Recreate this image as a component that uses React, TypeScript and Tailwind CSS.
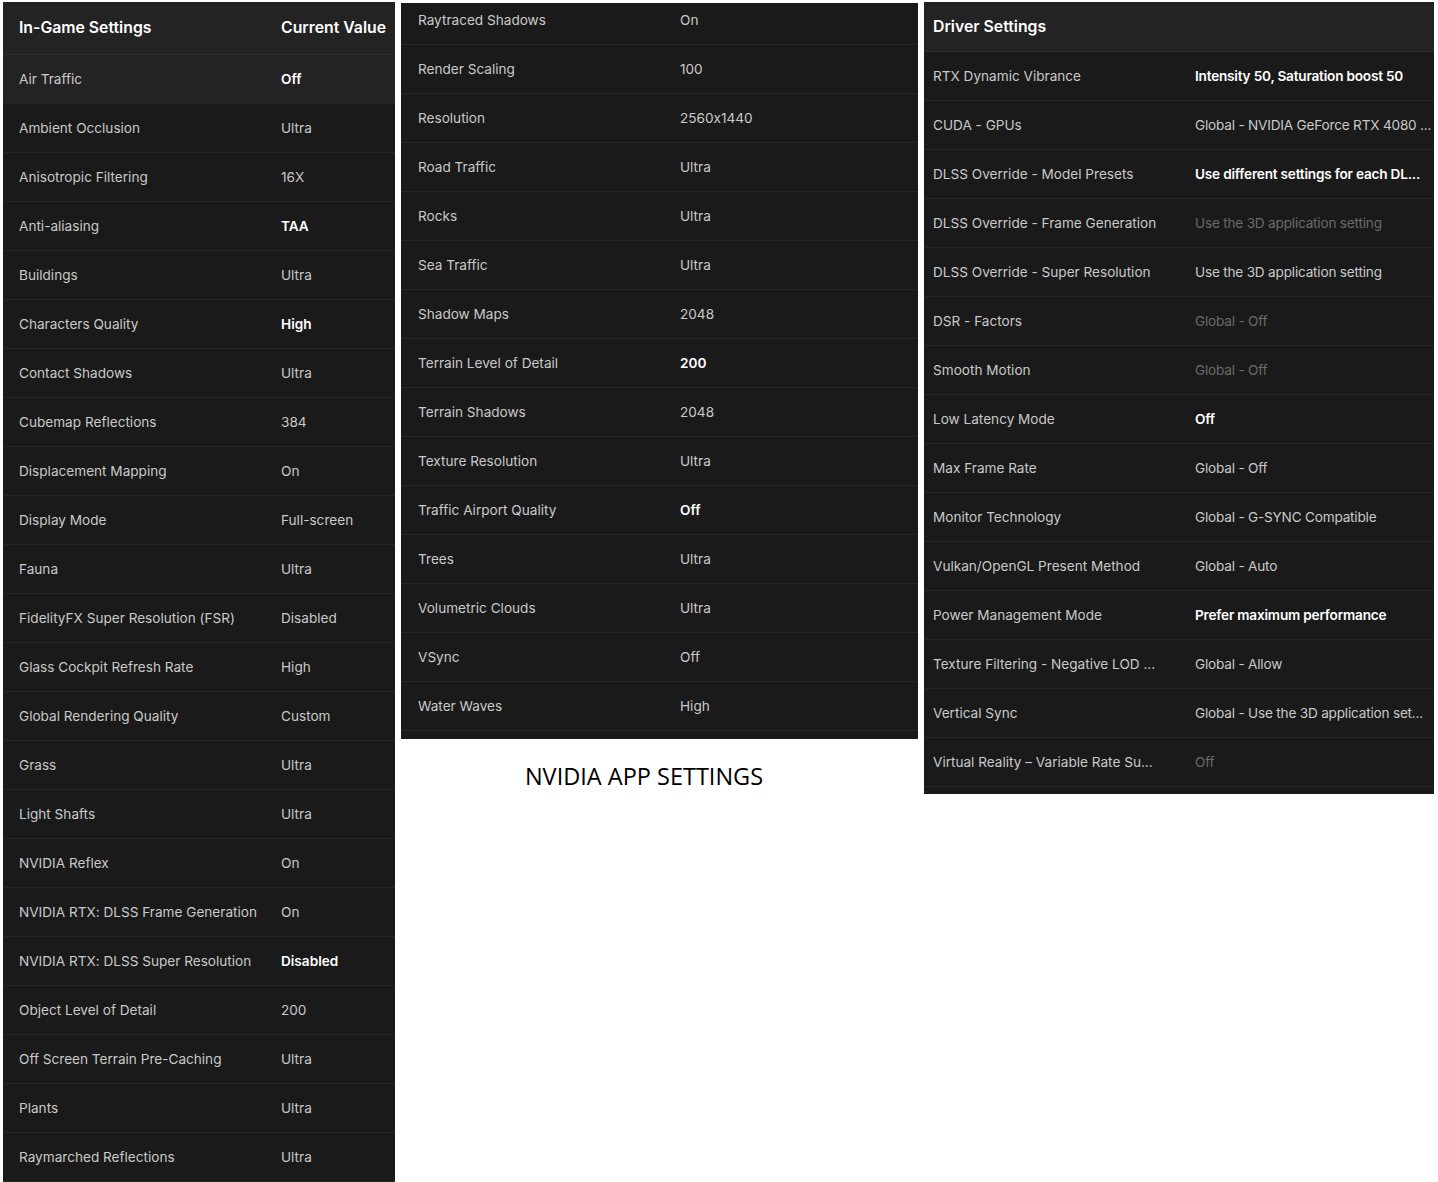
import React from "react";

type Row = { label: string; value: string; kind?: "bold" | "dim" | "normal" };

const leftRows: Row[] = [
  { label: "Air Traffic", value: "Off", kind: "bold" },
  { label: "Ambient Occlusion", value: "Ultra" },
  { label: "Anisotropic Filtering", value: "16X" },
  { label: "Anti-aliasing", value: "TAA", kind: "bold" },
  { label: "Buildings", value: "Ultra" },
  { label: "Characters Quality", value: "High", kind: "bold" },
  { label: "Contact Shadows", value: "Ultra" },
  { label: "Cubemap Reflections", value: "384" },
  { label: "Displacement Mapping", value: "On" },
  { label: "Display Mode", value: "Full-screen" },
  { label: "Fauna", value: "Ultra" },
  { label: "FidelityFX Super Resolution (FSR)", value: "Disabled" },
  { label: "Glass Cockpit Refresh Rate", value: "High" },
  { label: "Global Rendering Quality", value: "Custom" },
  { label: "Grass", value: "Ultra" },
  { label: "Light Shafts", value: "Ultra" },
  { label: "NVIDIA Reflex", value: "On" },
  { label: "NVIDIA RTX: DLSS Frame Generation", value: "On" },
  { label: "NVIDIA RTX: DLSS Super Resolution", value: "Disabled", kind: "bold" },
  { label: "Object Level of Detail", value: "200" },
  { label: "Off Screen Terrain Pre-Caching", value: "Ultra" },
  { label: "Plants", value: "Ultra" },
  { label: "Raymarched Reflections", value: "Ultra" },
];

const midRows: Row[] = [
  { label: "Raytraced Shadows", value: "On" },
  { label: "Render Scaling", value: "100" },
  { label: "Resolution", value: "2560x1440" },
  { label: "Road Traffic", value: "Ultra" },
  { label: "Rocks", value: "Ultra" },
  { label: "Sea Traffic", value: "Ultra" },
  { label: "Shadow Maps", value: "2048" },
  { label: "Terrain Level of Detail", value: "200", kind: "bold" },
  { label: "Terrain Shadows", value: "2048" },
  { label: "Texture Resolution", value: "Ultra" },
  { label: "Traffic Airport Quality", value: "Off", kind: "bold" },
  { label: "Trees", value: "Ultra" },
  { label: "Volumetric Clouds", value: "Ultra" },
  { label: "VSync", value: "Off" },
  { label: "Water Waves", value: "High" },
];

const rightRows: Row[] = [
  { label: "RTX Dynamic Vibrance", value: "Intensity 50, Saturation boost 50", kind: "bold" },
  { label: "CUDA - GPUs", value: "Global - NVIDIA GeForce RTX 4080 ..." },
  { label: "DLSS Override - Model Presets", value: "Use different settings for each DL...", kind: "bold" },
  { label: "DLSS Override - Frame Generation", value: "Use the 3D application setting", kind: "dim" },
  { label: "DLSS Override - Super Resolution", value: "Use the 3D application setting" },
  { label: "DSR - Factors", value: "Global - Off", kind: "dim" },
  { label: "Smooth Motion", value: "Global - Off", kind: "dim" },
  { label: "Low Latency Mode", value: "Off", kind: "bold" },
  { label: "Max Frame Rate", value: "Global - Off" },
  { label: "Monitor Technology", value: "Global - G-SYNC Compatible" },
  { label: "Vulkan/OpenGL Present Method", value: "Global - Auto" },
  { label: "Power Management Mode", value: "Prefer maximum performance", kind: "bold" },
  { label: "Texture Filtering - Negative LOD ...", value: "Global - Allow" },
  { label: "Vertical Sync", value: "Global - Use the 3D application set..." },
  { label: "Virtual Reality \u2013 Variable Rate Su...", value: "Off", kind: "dim" },
];

const font = { fontFamily: "Inter, 'Noto Sans', sans-serif" };

function SettingRow({
  row,
  highlight,
  labelCls,
  valueExtra = "",
}: {
  row: Row;
  highlight?: boolean;
  labelCls: string;
  valueExtra?: string;
}) {
  const valueCls =
    row.kind === "bold"
      ? "text-white font-semibold"
      : row.kind === "dim"
      ? "text-[#6a6a6a]"
      : "text-[#c9c9c9]";
  return (
    <div
      className={`flex h-[49px] items-center border-b border-[#262626] text-[13.6px] [font-feature-settings:'calt'_0] ${
        highlight ? "bg-[#232323]" : "bg-[#1a1a1a]"
      }`}
    >
      <div className={`shrink-0 whitespace-nowrap text-[#c9c9c9] ${labelCls}`}>{row.label}</div>
      <div className={`whitespace-nowrap ${valueCls} ${valueExtra}`}>{row.value}</div>
    </div>
  );
}

export default function App() {
  return (
    <div className="min-h-[1182px] w-[1438px] bg-white" style={font}>
      <div className="flex items-start">
        {/* Left panel */}
        <div className="ml-[3px] mt-[2px] h-[1180px] w-[392px] overflow-hidden bg-[#1a1a1a]">
          <div className="flex h-[53px] items-center border-b border-[#2e2e2e] bg-[#232323] text-[15.8px] font-semibold text-white">
            <div className="w-[278px] shrink-0 pl-[16px]">In-Game Settings</div>
            <div>Current Value</div>
          </div>
          {leftRows.map((r, i) => (
            <SettingRow key={r.label} row={r} highlight={i === 0} labelCls="w-[278px] pl-[16px]" />
          ))}
        </div>

        {/* Middle column */}
        <div className="ml-[6px] flex w-[517px] flex-col">
          <div className="mt-[3px] h-[736px] overflow-hidden bg-[#1a1a1a]">
            <div className="mt-[-7px]">
              {midRows.map((r) => (
                <SettingRow key={r.label} row={r} labelCls="w-[279px] pl-[17px]" />
              ))}
            </div>
          </div>
          <div
            className="mt-[20px] flex justify-center pr-[31px] text-[23.5px] text-black"
            style={{ fontFamily: "'Open Sans', 'Noto Sans', sans-serif" }}
          >
            NVIDIA APP SETTINGS
          </div>
        </div>

        {/* Right panel */}
        <div className="ml-[6px] mt-[2px] h-[792px] w-[510px] overflow-hidden bg-[#1a1a1a]">
          <div className="flex h-[50px] items-center border-b border-[#2e2e2e] bg-[#232323] pl-[9px] text-[15.8px] font-semibold text-white">
            Driver Settings
          </div>
          {rightRows.map((r) => (
            <SettingRow
              key={r.label}
              row={r}
              labelCls="w-[271px] pl-[9px]"
              valueExtra="tracking-[-0.2px]"
            />
          ))}
        </div>
      </div>
    </div>
  );
}
